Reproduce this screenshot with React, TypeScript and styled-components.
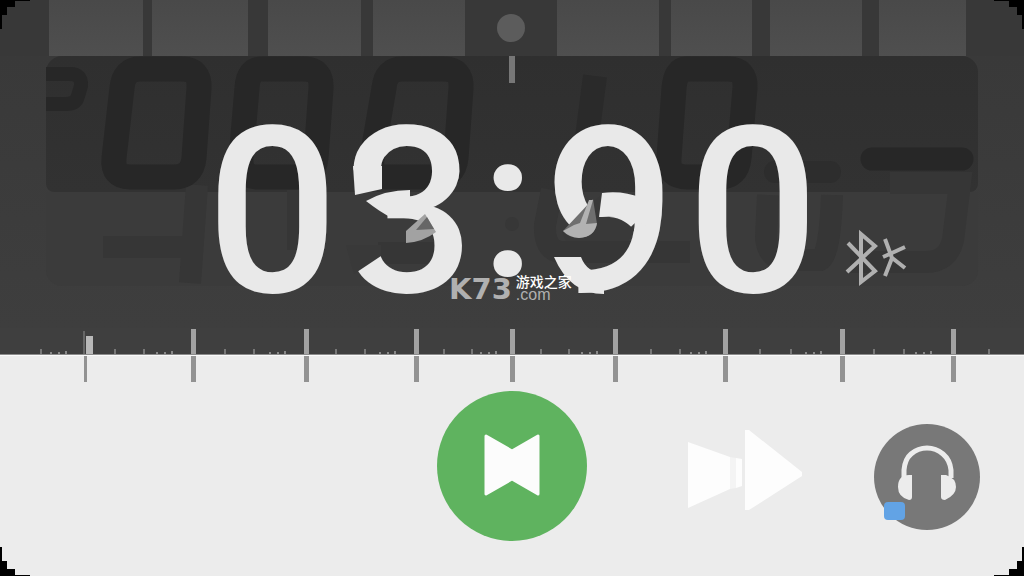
import React from "react";
import styled, { createGlobalStyle } from "styled-components";

const GlobalStyle = createGlobalStyle`
  * { box-sizing: border-box; }
  body { margin: 0; background: #ececec; font-family: Roboto, "Liberation Sans", sans-serif; }
`;

const Page = styled.main`
  position: relative;
  display: flex;
  flex-direction: column;
  min-height: 100vh;
  overflow: hidden;
  background: #ececec;
`;

const TileStrip = styled.header`
  display: grid;
  grid-template-columns:
    49fr 94fr 9fr 96fr 20fr 93fr 12fr 92fr 92fr 102fr
    12fr 81fr 18fr 92fr 17fr 87fr 58fr;
  align-items: center;
  justify-items: center;
  height: 56px;
  background: #383838;
`;

const Tile = styled.div<{ $column: number }>`
  grid-column: ${(p) => p.$column};
  grid-row: 1;
  width: 100%;
  height: 100%;
  background: linear-gradient(#494949, #4f4f4f);
`;

const Knob = styled.div`
  grid-column: 9;
  grid-row: 1;
  width: 28px;
  height: 28px;
  border-radius: 50%;
  background: #5c5c5c;
`;

const Display = styled.section`
  display: grid;
  height: 272px;
  background: linear-gradient(#393939, #3e3e3e);

  > * { grid-area: 1 / 1; }
`;

const Panels = styled.div`
  display: grid;
  grid-template-rows: 136px 94px;
  margin: 0 46px;
`;

const Panel = styled.div<{ $lower?: boolean }>`
  border-radius: ${(p) => (p.$lower ? "0 0 16px 16px" : "16px 16px 8px 8px")};
  background: ${(p) => (p.$lower ? "#3b3b3b" : "linear-gradient(#2f2f2f, #323232)")};
`;

const Ghosts = styled.svg`
  width: 100%;
  height: 272px;
`;

const Clock = styled.div`
  display: grid;
  grid-template-columns: 204fr 137fr 136fr 62fr 142fr 144fr 199fr;
  color: #e9e9e9;
`;

const Digit = styled.span<{ $column: number }>`
  grid-column: ${(p) => p.$column};
  grid-row: 1;
  justify-self: center;
  padding-top: 41px;
  font-size: 232px;
  line-height: 232px;
  font-weight: 500;
`;

const Colon = styled.span`
  grid-column: 4;
  grid-row: 1;
  justify-self: center;
  padding-top: 47px;
  font-size: 206px;
  line-height: 206px;
  font-weight: 500;
`;

const Bluetooth = styled.svg`
  grid-column: 7;
  grid-row: 1;
  width: 64px;
  height: 60px;
  margin: 172px 0 0 20px;
`;

const Ruler = styled.svg`
  display: block;
  width: 100%;
  height: 56px;
  background: linear-gradient(#3f3f3f 26px, #8c8c8c 26px, #8c8c8c 27px, #fafafa 27px, #fafafa 28px, #ececec 28px);
`;

const Controls = styled.section`
  display: grid;
  grid-template-columns: 1fr 150px 1fr;
  align-items: center;
  padding: 7px 44px 35px 44px;
`;

const PlayButton = styled.button`
  grid-column: 2;
  display: grid;
  place-items: center;
  width: 150px;
  height: 150px;
  padding: 0 0 2px;
  border: 0;
  border-radius: 50%;
  background: #5fb35f;
`;

const SideControls = styled.div`
  display: flex;
  align-items: center;
  justify-content: space-between;
  padding: 22px 0 0 98px;
`;

const SkipButton = styled.button`
  display: block;
  height: 94px;
  padding: 0;
  border: 0;
  background: none;
`;

const HeadphoneButton = styled.button`
  position: relative;
  width: 106px;
  height: 106px;
  padding: 0;
  border: 0;
  border-radius: 50%;
  background: #787878;
`;

const Badge = styled.span`
  position: absolute;
  left: 10px;
  bottom: 10px;
  width: 21px;
  height: 18px;
  border-radius: 4px;
  background: #62a3e5;
`;

const Watermark = styled.div`
  position: absolute;
  top: 274px;
  left: 50%;
  display: flex;
  gap: 4px;
  width: 128px;
  margin-left: -63px;
`;

const Brand = styled.span`
  color: #b0b0b0;
  font: 700 29px/30px "DejaVu Sans", sans-serif;
`;

const SiteName = styled.span`
  display: flex;
  flex-direction: column;
  color: #fff;
  white-space: nowrap;
  font: 500 14px/15px "Noto Sans CJK SC", sans-serif;
`;

const Domain = styled.span`
  color: #b0b0b0;
  font: 400 16px/12px "Liberation Sans", sans-serif;
`;

const Corner = styled.svg<{ $right?: boolean; $bottom?: boolean }>`
  position: absolute;
  ${(p) => (p.$right ? "right: 0;" : "left: 0;")}
  ${(p) => (p.$bottom ? "bottom: 0;" : "top: 0;")}
  width: 30px;
  height: 29px;
  transform: scale(${(p) => (p.$right ? -1 : 1)}, ${(p) => (p.$bottom ? -1 : 1)});
`;

const tileColumns = [2, 4, 6, 8, 10, 12, 14, 16];
const majorTicks = [193, 306, 416, 512, 615, 725, 842, 953];
const minorTicks = [41, 115, 144, 225, 254, 336, 365, 444, 472, 541, 569, 651, 680, 760, 791, 874, 904, 989];
const clusterTicks = [66, 172, 285, 395, 496, 597, 706, 821, 931];
const corners = [[false, false], [true, false], [false, true], [true, true]];

export default function App() {
  return (
    <>
      <GlobalStyle />
      <Page>
        <TileStrip>
          {tileColumns.map((column) => <Tile key={column} $column={column} />)}
          <Knob />
        </TileStrip>

        <Display>
          <Panels>
            <Panel />
            <Panel $lower />
          </Panels>

          <Ghosts viewBox="0 56 1024 272" preserveAspectRatio="none" aria-hidden="true" fill="none">
            <g stroke="#363636" strokeWidth="22">
              <path d="M103 247H188M197 185L190 283" />
              <path d="M298 190V250M378 253H450M552 190L545 225Q544 250 560 252H690M768 195L766 238Q768 258 785 260H820Q830 255 832 195" />
              <path d="M890 183H960L953 240Q948 262 926 262H850" />
            </g>
            <g stroke="#272727" strokeWidth="25">
              <path d="M46 74H70Q82 74 81 86L78 96Q76 104 66 104H46" strokeWidth="14" />
              <path d="M140 69H182Q200 69 199 88L194 158Q192 177 174 177H130Q112 177 114 158L122 88Q124 69 140 69Z" />
              <path d="M262 69H304Q322 69 321 88L316 158Q314 177 296 177H258Q240 177 241 158L247 88Q248 69 262 69Z" />
              <path d="M402 69H444Q462 69 461 88L456 158Q454 177 436 177H386Q370 177 372 158L384 88Q386 69 402 69Z" />
              <path d="M595 76L586 145" strokeWidth="24" stroke="#2a2a2a" />
              <path d="M686 69H728Q746 69 745 88L739 158Q737 177 720 177H688Q667 177 669 158L674 88Q676 69 686 69Z" />
              <path d="M872 159H962" strokeWidth="23" strokeLinecap="round" />
              <path d="M775 172H830" strokeWidth="22" strokeLinecap="round" stroke="#2d2d2d" />
            </g>
            <path d="M512 56V83" stroke="#777" strokeWidth="6" />
            <circle cx="512" cy="224" r="7" fill="#373737" />
          </Ghosts>

          <Clock>
            <Digit $column={2}>0</Digit>
            <Digit $column={3}>3</Digit>
            <Colon>:</Colon>
            <Digit $column={5}>9</Digit>
            <Digit $column={6}>0</Digit>
            <Bluetooth viewBox="845 228 64 60" fill="none" stroke="#b0b0b0" strokeWidth="4" aria-label="Bluetooth">
              <path d="M848 243L875 271L861 282V234L875 246L847 272" />
              <path d="M885 239L892 258L885 276M883 257L905 247M891 257L905 268" />
            </Bluetooth>
          </Clock>

          <Ghosts viewBox="0 56 1024 272" preserveAspectRatio="none" aria-hidden="true">
            <path d="M346 245H381V256L354 274Z" fill="#393939" />
            <path d="M562 232L600 196V217Q622 215 634 230L628 241H566Z" fill="#393939" />
            <g fill="#e9e9e9">
              <path d="M353 166H382V189L355 195Z" />
              <path d="M366 201Q385 190 410 190V218H392Q380 212 366 201Z" />
              <path d="M602 193Q622 190 642 198L646 226Q626 214 599 217Z" />
              <path d="M554 257H581Q587 273 604 273V294Q570 294 554 257Z" />
            </g>
            <path d="M425 214L436 232Q423 242 406 243V231Z" fill="#a2a2a2" />
            <path d="M427 217L434 229L416 230Z" fill="#666" />
            <path d="M593 199L597 224Q594 237 579 238Q569 238 563 231Z" fill="#6f6f6f" />
            <path d="M589 200H593L586 224L597 223Q595 237 579 238Q569 237 563 231L574 225L580 223Z" fill="#b2b2b2" />
          </Ghosts>
        </Display>

        <Ruler viewBox="0 328 1024 56" preserveAspectRatio="none" aria-hidden="true">
          {majorTicks.map((x) => (
            <g key={x}>
              <rect x={x - 2} y="329" width="5" height="25" fill="#a2a2a2" />
              <rect x={x - 2} y="356" width="5" height="26" fill="#929292" />
            </g>
          ))}
          <path d="M84 331V354" stroke="#666" strokeWidth="2" />
          <rect x="86" y="336" width="7" height="18" fill="#b8b8b8" />
          <rect x="84" y="356" width="3" height="26" fill="#929292" />
          {minorTicks.map((x) => <rect key={x} x={x - 1} y="349" width="2" height="5" fill="#777" />)}
          {clusterTicks.map((x) => (
            <path key={x} d={`M${x - 15} 352v2M${x - 7} 352v2M${x} 351v3`} stroke="#888" strokeWidth="2" />
          ))}
        </Ruler>

        <Controls>
          <PlayButton type="button" aria-label="Play">
            <svg width="56" height="62" viewBox="0 0 56 62" fill="#fcfcfc" stroke="#fcfcfc" strokeWidth="3" strokeLinejoin="round">
              <path d="M2 2L28 17L54 2V60L28 45L2 60Z" />
            </svg>
          </PlayButton>
          <SideControls>
            <SkipButton type="button" aria-label="Skip forward">
              <svg width="118" height="94" viewBox="686 430 118 94" fill="#fdfdfd">
                <path d="M689 442L731 457V489L689 508ZM737 458L743 459V486L737 488ZM746 430L750 430L803 472V476L750 510H746Z" />
                <path d="M731 457L737 458V488L731 489Z" fill="#f4f4f4" />
              </svg>
            </SkipButton>
            <HeadphoneButton type="button" aria-label="Headphones">
              <svg width="106" height="106" viewBox="874 424 106 106" fill="#ececec">
                <path d="M904 478V470Q905 459 911 454Q918 448 927 448Q936 448 943 454Q950 460 951 470V478" fill="none" stroke="#ececec" strokeWidth="5" />
                <path d="M912 475V497Q912 500 909 500Q898 497 898 487Q898 475 909 475ZM941 475H946Q956 478 956 487Q956 495 945 500Q941 500 941 497Z" />
              </svg>
              <Badge />
            </HeadphoneButton>
          </SideControls>
        </Controls>

        <Watermark>
          <Brand>K73</Brand>
          <SiteName>
            游戏之家
            <Domain>.com</Domain>
          </SiteName>
        </Watermark>

        {corners.map(([right, bottom]) => (
          <Corner key={`${right}-${bottom}`} $right={right} $bottom={bottom} viewBox="0 0 30 29" aria-hidden="true">
            <path d="M0 0H30V1H15V7H7V15H2V29H0Z" />
          </Corner>
        ))}
      </Page>
    </>
  );
}
